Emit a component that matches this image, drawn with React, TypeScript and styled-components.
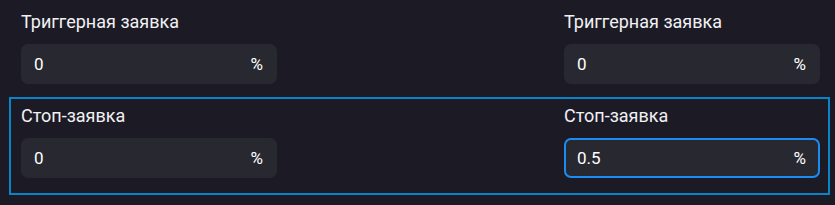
import styled, { createGlobalStyle } from "styled-components";

const GlobalStyle = createGlobalStyle`
  html, body {
    margin: 0;
    padding: 0;
    background: #1c1b25;
  }
  body {
    font-family: Roboto, "Liberation Sans", Arial, sans-serif;
  }
`;

interface FieldData {
  label: string;
  value: string;
  focused?: boolean;
}

const rows: { highlighted: boolean; fields: FieldData[] }[] = [
  {
    highlighted: false,
    fields: [
      { label: "Триггерная заявка", value: "0" },
      { label: "Триггерная заявка", value: "0" },
    ],
  },
  {
    highlighted: true,
    fields: [
      { label: "Стоп-заявка", value: "0" },
      { label: "Стоп-заявка", value: "0.5", focused: true },
    ],
  },
];

function Field(props: { field: FieldData }) {
  const { field } = props;

  return (
    <FieldContainer>
      <Label>{field.label}</Label>
      <InputBox $focused={!!field.focused}>
        <Value>{field.value}</Value>
        <Unit>%</Unit>
      </InputBox>
    </FieldContainer>
  );
}

export default function App() {
  return (
    <>
      <GlobalStyle />
      <Page>
        {rows.map((row, i) => (
          <Section key={i} $highlighted={row.highlighted}>
            {row.fields.map((field, j) => (
              <Field key={j} field={field} />
            ))}
          </Section>
        ))}
      </Page>
    </>
  );
}

const Page = styled.div`
  width: 835px;
  height: 205px;
  box-sizing: border-box;
  padding: 3px 5px 0 9px;
  background: #1c1b25;
`;

const Section = styled.div<{ $highlighted: boolean }>`
  display: grid;
  grid-template-columns: 256px 256px;
  justify-content: space-between;
  box-sizing: border-box;
  padding: ${(p) => (p.$highlighted ? "7px 8px 15px 10px" : "7px 8px 11px 10px")};
  border: 2px solid ${(p) => (p.$highlighted ? "#0a84c9" : "transparent")};
`;

const FieldContainer = styled.div`
  display: flex;
  flex-direction: column;
  row-gap: 12px;
`;

const Label = styled.div`
  font-size: 18px;
  line-height: 20px;
  font-weight: 400;
  color: #f1f1f4;
`;

const InputBox = styled.div<{ $focused: boolean }>`
  display: flex;
  align-items: center;
  justify-content: space-between;
  height: 40px;
  box-sizing: border-box;
  padding: 0 12px 0 11px;
  background: #282831;
  border: 2px solid ${(p) => (p.$focused ? "#1b8cf2" : "transparent")};
  border-radius: 7px;
  font-size: 17px;
  color: #ffffff;
`;

const Value = styled.span`
  line-height: 20px;
`;

const Unit = styled.span`
  line-height: 20px;
`;
